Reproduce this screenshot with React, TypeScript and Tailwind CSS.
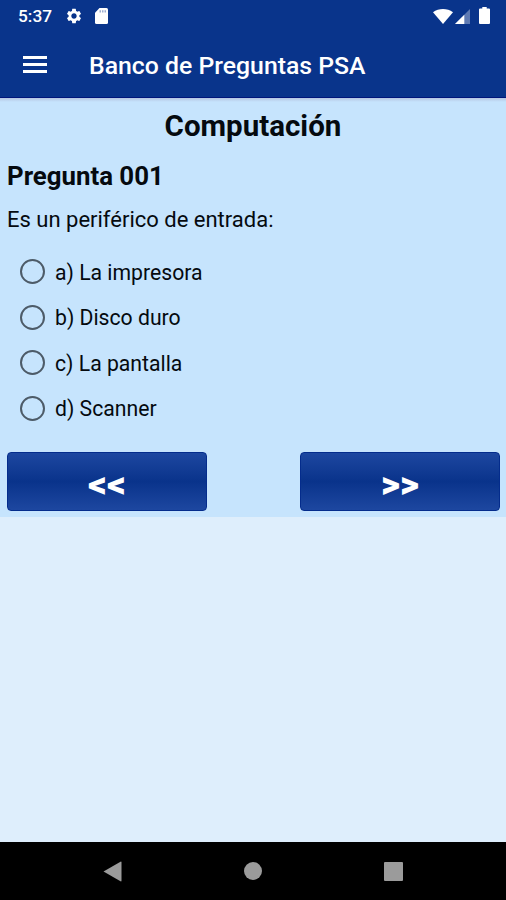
import { MdSettings } from 'react-icons/md';

interface QuestionRecord {
  category: string;
  title: string;
  statement: string;
  options: string[];
}

const question: QuestionRecord = {
  category: 'Computación',
  title: 'Pregunta 001',
  statement: 'Es un periférico de entrada:',
  options: ['a) La impresora', 'b) Disco duro', 'c) La pantalla', 'd) Scanner'],
};

function StatusBar() {
  return (
    <div className="flex h-8 items-center pr-4 pl-[18px] text-white">
      <span className="w-[47px] text-[17.3px] leading-8 font-medium">5:37</span>
      <MdSettings className="h-[18px] w-[18px]" />
      <svg className="ml-3 h-4 w-[13px]" viewBox="0 0 13 16" fill="currentColor">
        <path d="M4.5 0H11.5Q13 0 13 1.5V14.5Q13 16 11.5 16H1.5Q0 16 0 14.5V4.8Z" />
        <path d="M4.5 2.2H6V4.6H4.5ZM7 2.2H8.5V4.6H7ZM9.5 2.2H11V4.6H9.5Z" fill="#09348b" opacity="0.4" />
      </svg>
      <div className="ml-auto flex items-center">
        <svg className="h-[15px] w-5" viewBox="0 0 20 15" fill="currentColor">
          <path d="M0 3.2C5.8-1 14.2-1 20 3.2L10 15Z" />
        </svg>
        <svg className="ml-[2px] h-[15px] w-[15px]" viewBox="0 0 15 15" fill="currentColor">
          <path d="M15 0V15H0Z" opacity="0.35" />
          <path d="M9.3 5.7V15H0Z" />
        </svg>
        <svg className="mb-[2px] ml-[9px] h-[17px] w-[11px]" viewBox="0 0 11 17" fill="currentColor">
          <path d="M3.3 0H7.7V1.5H10Q11 1.5 11 2.5V16Q11 17 10 17H1Q0 17 0 16V2.5Q0 1.5 1 1.5H3.3Z" />
        </svg>
      </div>
    </div>
  );
}

function Toolbar() {
  return (
    <div className="flex h-[66px] items-center pl-[23px] text-white">
      <button className="mb-[2px] flex w-6 flex-col gap-1" aria-label="Menú">
        <span className="h-[3px] w-full bg-white" />
        <span className="h-[3px] w-full bg-white" />
        <span className="h-[3px] w-full bg-white" />
      </button>
      <h1 className="mt-[2px] ml-[42px] text-[24.8px] font-medium whitespace-nowrap">Banco de Preguntas PSA</h1>
    </div>
  );
}

function NavButton({ label }: { label: string }) {
  return (
    <button className="h-[59px] w-[200px] rounded-[4px] border border-[#042c8c] bg-linear-to-b from-[#1d47a0] via-[#09338b] to-[#1d47a0] pt-[5px] text-[37px] leading-none font-black text-white">
      {label}
    </button>
  );
}

function SystemNav() {
  return (
    <nav className="flex h-[58px] items-center justify-between bg-black pr-[103px] pl-[103px] text-[#9b9b9b]">
      <svg className="h-[21px] w-[19px]" viewBox="0 0 19 21" fill="currentColor">
        <path d="M0.5 10.5 17.5 0.7Q18.5 0.2 18.5 1.5V19.5Q18.5 20.8 17.5 20.3Z" />
      </svg>
      <span className="h-[18px] w-[18px] rounded-full bg-[#9b9b9b]" />
      <span className="h-[19px] w-[19px] rounded-[1px] bg-[#9b9b9b]" />
    </nav>
  );
}

export default function App() {
  return (
    <div className="flex h-[900px] w-[506px] flex-col overflow-hidden bg-[#deeefc] font-['Roboto',sans-serif] text-[#050a0f]">
      <header className="h-[98px] shrink-0 border-b border-[#00157b] bg-[#09348b]">
        <StatusBar />
        <Toolbar />
      </header>

      <main className="h-[419px] bg-[#c6e4fd]">
        <div className="h-1 bg-linear-to-b from-[#b5c6e2] to-[#c6e4fd]" />
        <h2 className="mt-[7px] text-center text-[29.5px] leading-[34px] font-bold">{question.category}</h2>
        <h3 className="mt-4 pl-[7px] text-[25.8px] leading-[34px] font-bold">{question.title}</h3>
        <p className="mt-[10px] pl-[7px] text-[22px] leading-[34px]">{question.statement}</p>

        <div className="mt-3 pl-5">
          {question.options.map((option) => (
            <label key={option} className="flex h-[45.5px] items-center">
              <input
                type="radio"
                name="answer"
                className="h-[25px] w-[25px] appearance-none rounded-full border-2 border-[#4d5b68]"
              />
              <span className="mt-[2px] ml-[10px] text-[21.2px]">{option}</span>
            </label>
          ))}
        </div>

        <div className="mt-[21px] flex justify-between pr-[6px] pl-[7px]">
          <NavButton label="<<" />
          <NavButton label=">>" />
        </div>
      </main>

      <div className="flex-1" />
      <SystemNav />
    </div>
  );
}
